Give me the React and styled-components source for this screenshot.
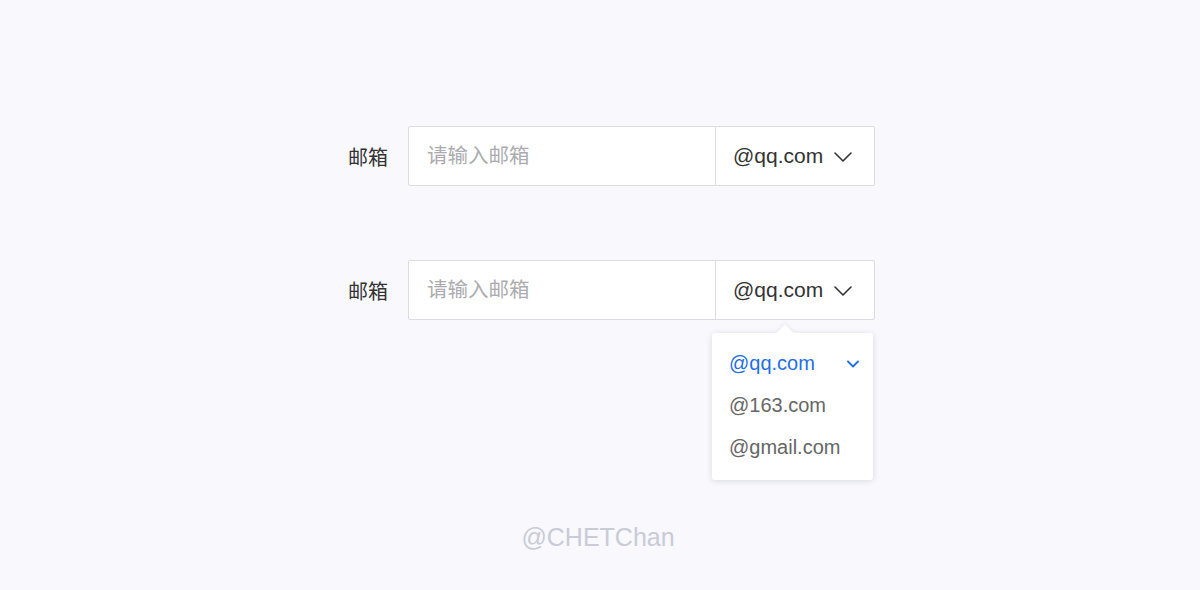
import React from "react";
import styled, { createGlobalStyle } from "styled-components";

const GlobalStyle = createGlobalStyle`
  body {
    margin: 0;
    background: #f8f8fd;
    font-family: "Liberation Sans", "Noto Sans CJK SC", sans-serif;
  }
`;

const domains = ["@qq.com", "@163.com", "@gmail.com"];

function Chevron({ size = 18, color = "#333", stroke = 1.6 }) {
  return (
    <svg width={size} height={size / 2 + 1} viewBox="0 0 18 10" fill="none">
      <path d="M1 1L9 9L17 1" stroke={color} strokeWidth={stroke} strokeLinecap="round" strokeLinejoin="round" />
    </svg>
  );
}

function Check() {
  return (
    <svg width="12" height="8" viewBox="0 0 12 8" fill="none">
      <path d="M1 1.5L6 6.5L11 1.5" stroke="#1f6fe5" strokeWidth="1.8" strokeLinecap="round" strokeLinejoin="round" />
    </svg>
  );
}

function EmailRow({ open }) {
  return (
    <Row>
      <Label>邮箱</Label>
      <Field>
        <Input placeholder="请输入邮箱" />
        <Select>
          <span>@qq.com</span>
          <Chevron />
          {open && (
            <Menu>
              {domains.map((d, i) => (
                <Option key={d} active={i === 0}>
                  {d}
                  {i === 0 && <Check />}
                </Option>
              ))}
            </Menu>
          )}
        </Select>
      </Field>
    </Row>
  );
}

export default function App() {
  return (
    <>
      <GlobalStyle />
      <Page>
        <Form>
          <EmailRow />
          <EmailRow open />
        </Form>
        <Mark>@CHETChan</Mark>
      </Page>
    </>
  );
}

const Page = styled.div`
  height: 590px;
  padding-top: 126px;
  box-sizing: border-box;
  display: flex;
  flex-direction: column;
`;

const Form = styled.div`
  margin-left: calc(50% - 252px);
  display: flex;
  flex-direction: column;
  gap: 74px;
`;

const Row = styled.div`
  display: flex;
  align-items: center;
`;

const Label = styled.div`
  width: 60px;
  font-size: 20px;
  color: #333;
`;

const Field = styled.div`
  display: flex;
  height: 60px;
  box-sizing: border-box;
  border: 1px solid #dcdde3;
  border-radius: 2px;
  background: #fff;
`;

const Input = styled.input`
  width: 307px;
  border: none;
  border-right: 1px solid #dcdde3;
  outline: none;
  padding: 0 0 0 18px;
  box-sizing: border-box;
  font-family: "Liberation Sans", "Noto Sans CJK SC", sans-serif;
  font-size: 20.5px;
  color: #333;
  background: transparent;
  &::placeholder {
    color: #acacb0;
  }
`;

const Select = styled.div`
  position: relative;
  width: 158px;
  display: flex;
  align-items: center;
  justify-content: space-between;
  padding: 0 22px 0 17px;
  box-sizing: border-box;
  font-size: 21px;
  color: #333;
  svg {
    margin-top: 2px;
  }
`;

const Menu = styled.div`
  position: absolute;
  top: 72px;
  left: -4px;
  width: 161px;
  padding: 9px 0 12px;
  box-sizing: border-box;
  background: #fff;
  border-radius: 3px;
  box-shadow: 0 1px 6px rgba(30, 35, 60, 0.14);
  &::before {
    content: "";
    position: absolute;
    top: -6px;
    left: 67px;
    width: 12px;
    height: 12px;
    background: #fff;
    transform: rotate(45deg);
    box-shadow: -2px -2px 4px rgba(30, 35, 60, 0.05);
  }
`;

const Option = styled.div`
  position: relative;
  height: 42px;
  display: flex;
  align-items: center;
  justify-content: space-between;
  padding: 0 14px 0 17px;
  font-size: 20px;
  color: ${(p) => (p.active ? "#1f6fe5" : "#666")};
`;

const Mark = styled.div`
  margin-top: 203px;
  text-align: center;
  font-size: 25px;
  color: #c9cbd7;
  padding-right: 4px;
`;
